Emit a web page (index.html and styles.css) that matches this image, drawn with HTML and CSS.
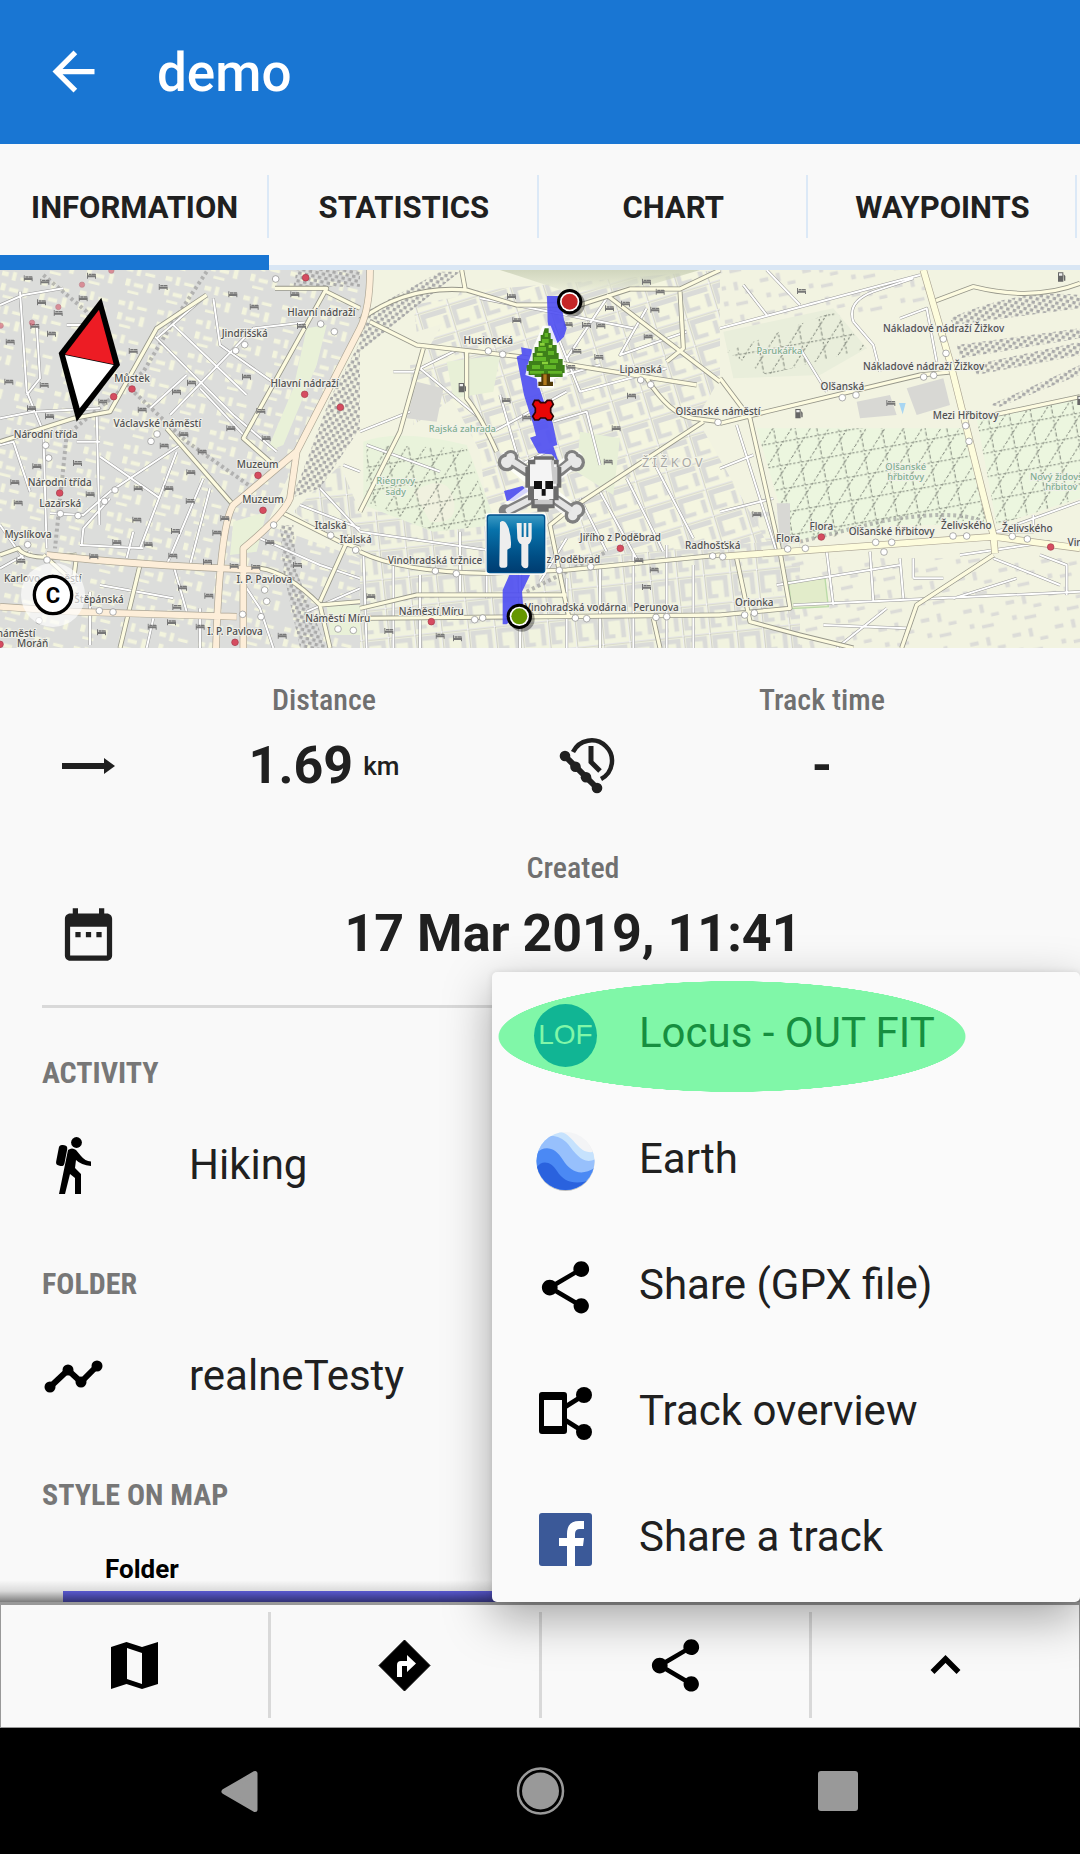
FILE: index.html
```html
<!DOCTYPE html>
<html lang="en">
<head>
<meta charset="utf-8">
<meta name="viewport" content="width=device-width, initial-scale=1">
<title>demo</title>
<link rel="stylesheet" href="styles.css">
</head>
<body>
<div class="app">
  <header class="topbar">
    <button class="back" type="button" aria-label="Back">
      <svg class="icon" viewBox="0 0 24 24"><path fill="#fff" d="M20 11H7.83l5.59-5.59L12 4l-8 8 8 8 1.41-1.41L7.83 13H20v-2z"/></svg>
    </button>
    <h1 class="title">demo</h1>
  </header>

  <nav class="tabs">
    <a class="tab tab-active" href="#information">INFORMATION</a>
    <a class="tab" href="#statistics">STATISTICS</a>
    <a class="tab" href="#chart">CHART</a>
    <a class="tab" href="#waypoints">WAYPOINTS</a>
    <span class="tab"></span>
  </nav>

  <div class="stage">
    <main class="content" id="information">
      <svg class="map" viewBox="0 15 3240 1134" role="img" aria-label="Track map">
        <defs>
          <pattern id="oldtown" width="120" height="104" patternUnits="userSpaceOnUse" patternTransform="rotate(14)">
            <rect width="120" height="104" fill="#dcdddb"/>
            <path fill="#f3f4de" d="M12 14h20v14h-20zM44 10h12v26h-12zM70 20h30v10h-30zM18 50h14v22h-14zM44 58h28v12h-28zM86 48h14v30h-14zM30 84h34v8h-34z"/>
          </pattern>
          <pattern id="blocks" width="96" height="84" patternUnits="userSpaceOnUse" patternTransform="rotate(-17)">
            <rect width="96" height="84" fill="#f4f5e0"/>
            <path fill="#dadbd8" d="M8 8h80v16h-80zM8 24h14v46h-14zM74 30h14v40h-14zM22 58h30v12h-30z"/>
            <path d="M0 0h96M0 0v84" stroke="#999" stroke-width="8"/>
            <path d="M0 0h96M0 0v84" stroke="#fff" stroke-width="5"/>
          </pattern>
          <pattern id="blocks2" width="80" height="88" patternUnits="userSpaceOnUse" patternTransform="rotate(-6)">
            <rect width="80" height="88" fill="#f1f3df"/>
            <path fill="#dadbd8" d="M8 8h64v14h-64zM8 22h14v52h-14zM58 22h14v52h-14zM22 62h18v12h-18z"/>
            <path d="M0 0h80M0 0v88" stroke="#999" stroke-width="8"/>
            <path d="M0 0h80M0 0v88" stroke="#fff" stroke-width="5"/>
          </pattern>
          <pattern id="suburb" width="130" height="100" patternUnits="userSpaceOnUse" patternTransform="rotate(-12)">
            <path fill="#dcdcd8" d="M10 14h26v12h-26zM60 8h12v26h-12zM90 40h24v10h-24zM20 60h14v14h-14zM56 70h36v10h-36z"/>
          </pattern>
          <pattern id="paths" width="64" height="70" patternUnits="userSpaceOnUse" patternTransform="rotate(-10)">
            <path d="M0 20h64M24 0v70M0 70L64 0" fill="none" stroke="#7c8277" stroke-width="3" stroke-dasharray="7 6"/>
          </pattern>
          <pattern id="rail" width="20" height="24" patternUnits="userSpaceOnUse" patternTransform="rotate(12)">
            <path fill="#aaa" d="M0 0h10v10h-10zM10 12h10v10h-10z"/>
          </pattern>
          <linearGradient id="plate" x1="0" y1="0" x2="0" y2="1">
            <stop offset="0" stop-color="#3c9bc4"/><stop offset=".25" stop-color="#0873ab"/><stop offset=".7" stop-color="#004f86"/><stop offset="1" stop-color="#003c70"/>
          </linearGradient>
          <linearGradient id="hill" x1="0" y1="0" x2="0" y2="1">
            <stop offset="0" stop-color="#c2c9ae"/><stop offset="1" stop-color="#e9ecd8"/>
          </linearGradient>
          <symbol id="bed" viewBox="0 0 30 20"><path fill="#777" d="M1 1h3v8h24v10h-3v-4H4v4H1zM6 4h9v4H6zM16 4h10q2 1 2 4H16z"/></symbol>
          <symbol id="fuel" viewBox="0 0 26 32"><path fill="#666" d="M2 2h16v28H2zM19 8l5 5v14h-4z"/><path fill="#eee" d="M5 5h10v7H5z"/></symbol>

          <g id="minor">
            <path d="M0 120L70 90 190 70M60 80L80 380 130 500 140 850M0 460L100 440 300 430M110 180L120 340 80 390M200 180h60v200M290 440L298 780M300 575L480 700M150 745L250 750 330 680 540 540M230 530h70M245 840L250 790 330 700M530 560L420 850M610 640L500 900M630 670L570 900M240 840L430 850M0 540L40 530 90 680M0 780L70 880M465 215L700 450 830 560M600 370L740 520M520 180L740 390M510 450L760 190 930 170M640 100L660 240 830 360M620 90L470 220M560 330L450 430M400 800L380 880M0 910L90 860M300 960L520 1000M270 980v160M460 1060L440 1149M520 900L560 1040M600 1030v119M920 1040L1080 970M780 820L960 900 1080 940M900 720L1080 790M1030 600L1080 620M960 670L1080 800M720 940L780 1030 820 1149"/>
            <path d="M1080 500L1230 440M1240 320L1380 250M1180 320h80M1260 310L1440 460M1440 100L1700 150 1900 190M1100 540L1320 620M1480 500L1700 380M1500 390L1560 600 1640 560M1620 350L1800 300M1660 470L1760 440 1800 600M1380 800v180M1460 800v200M1560 900v249M1620 950L1700 820M1700 940v209M1800 900v249M1900 860v289M2000 840v309M2080 900v249M1740 700L1820 860M1800 680L1920 900M1880 640L1990 860M1960 590L2080 820M1660 180L1740 380 2000 310M1820 100L1700 280M1940 130L1860 270 2060 200M1090 860L1100 1149M1180 900v249M1260 930v219M1080 800L1500 860"/>
            <path d="M2160 190L2760 30M2300 15L2400 120M2230 60L2300 150M2560 170Q2540 110 2620 80L2740 40M2560 170L2620 240 2640 320M2480 380L2400 250M2700 160L2780 130 2810 290M2160 610L2260 570M2160 740L2320 700M2210 480L2330 860M2330 960L2700 900M2480 860L2500 1020M2610 860L2620 1010M2700 880L2710 1000M2380 1020L3240 980M2740 940h90M2740 880v60M2660 1030L2510 1149M3120 870L3200 900V990M3100 750V800L2990 800 3240 710M2980 880L3180 960M2880 870L3150 830M2470 1080L2720 1090M2860 1000L3050 940"/>
          </g>
          <g id="major">
            <path d="M0 530L220 460 330 440 470 190 620 90M0 870L55 850Q80 890 230 870M230 870L220 950 130 870M420 900L360 1149M825 70H980L730 520 810 590M980 80L1080 130M500 490L700 720M850 745L1020 830 1080 850M780 910Q860 920 960 1020L990 1149M960 1020L1080 1010M1050 810L960 1010"/>
            <path d="M1080 165Q1220 60 1400 75L1550 120 1740 120 1890 72 2040 72 2160 15M1110 170L1250 240 1560 275 1900 330 2090 360M1270 250L1200 500 1080 740M1400 260V400Q1440 450 1490 560M1820 90L2160 350M2040 80L2050 250 2000 290M1940 340Q2010 450 2080 460L2160 470M2110 470L1700 740 1650 780 1705 1050M1080 860Q1200 920 1460 925L1700 915 2160 870M1080 1030L1250 990H1700M1080 1060L2160 1050M1960 1060L1980 1149M1385 15L1395 70"/>
            <path d="M2160 475L2300 440 2760 330 2860 320M2160 340L2250 460 2340 860 2370 1030 2160 1050M2210 880L2250 1070 2400 1110 2560 1149M2800 110L2920 65Q3100 110 3240 55M2980 450L3240 395"/>
            <path d="M2980 870L2750 1020 2705 1149"/>
          </g>
          <g id="trunk">
            <path d="M140 870Q400 900 780 915M0 1025L220 1040 710 1055M1110 15Q1110 130 1080 190L890 560 870 700Q850 750 730 850V1149M890 560L700 720Q660 780 648 1149"/>
          </g>
          <g id="avenue">
            <path d="M2770 15L2850 290 2980 810 2985 865M2160 875L2980 815 3240 850"/>
          </g>
        </defs>

        <rect y="15" width="3240" height="1134" fill="#f2f3e1"/>
        <path fill="url(#oldtown)" d="M0 15H1110L1080 180 880 600 800 780 1080 880V1149H0z"/>
        <path fill="url(#blocks2)" d="M880 740L1020 600 1080 740H2400V1149H1080L1080 880z"/>
        <path fill="url(#blocks)" d="M1380 80L2160 15V340L2090 460 2300 830 1480 900 1440 560 1280 260z"/>
        <path fill="url(#blocks)" d="M1230 300L1340 290 1360 400 1240 480zM1240 120L1400 90 1380 160 1250 200z"/>
        <path fill="url(#suburb)" d="M2160 15h620v100l-600 120zM2320 880h920v269H2320z"/>
        <path fill="url(#hill)" opacity=".7" d="M1500 15H2100L1950 60 1700 80z"/>
        <path fill="#e9eedb" d="M2170 200L2500 130 2600 250 2460 330 2200 340z"/>
        <path fill="#e9f3db" d="M1090 530Q1200 490 1400 540L1490 780 1300 800 1090 720z"/>
        <path fill="#f0f1df" d="M1240 680Q1340 620 1360 700T1290 770z"/>
        <path fill="#e8f0d7" d="M1340 290L1500 270 1480 380 1360 400zM1740 500L1860 520 1840 690 1730 620z"/>
        <path fill="#ecf6df" d="M2270 490H2890L2960 780 2660 780 2370 830zM2930 460L3240 390V700L2990 780z"/>
        <path fill="#e2ecca" stroke="#badba7" stroke-width="4" d="M2365 950l110-10 10 85-110 6z"/>
        <path fill="url(#paths)" d="M1100 540L1400 550 1480 780 1300 800 1100 710zM2270 490H2890L2960 760 2370 830zM2930 460L3240 390V700L2990 780zM2180 260L2500 140 2600 250 2300 330z"/>
        <path fill="#e9f1d8" d="M920 190L980 180 950 300 850 540 800 560 880 370zM700 770L800 740 770 860 690 870zM980 1020H1080V1110H990z"/>
        <path fill="url(#rail)" d="M890 15H1080V65H880zM1080 230L990 400 960 480 900 640 870 700 960 670 1080 490zM840 780h40l10 140 90 229h-80L850 920zM1080 260L1380 20h-60L1080 150zM2850 160Q3050 70 3240 90V130L2860 180zM2870 240L3240 190V220L2880 280zM2920 300L3240 230V270L2930 330zM2970 420L3240 300V330L3000 425z"/>
        <path fill="none" stroke="#999" stroke-width="12" stroke-dasharray="9 9" opacity=".65" d="M130 30L260 140 310 240M620 20L520 170 430 320 200 510 165 850M390 370L560 530 760 670M2400 830L2640 770Q2860 730 2950 770M1580 980L1820 860"/>
        <path fill="#d8d8d4" d="M2720 370l110-30 20 80-100 30zM2570 410l100-20 20 60-110 10zM1250 350l80 20-20 100-90-10zM2330 715h40v120h-30z"/>

        <use href="#minor" class="street-edge"/>
        <use href="#minor" class="street"/>
        <use href="#major" class="road-edge"/>
        <use href="#major" class="road"/>
        <use href="#trunk" class="trunk-edge"/>
        <use href="#trunk" class="trunk"/>
        <use href="#avenue" class="trunk-edge"/>
        <use href="#avenue" class="avenue"/>

        <g>
          <use href="#bed" x="70" y="30" width="30" height="20"/><use href="#bed" x="120" y="40" width="30" height="20"/><use href="#bed" x="260" y="22" width="30" height="20"/><use href="#bed" x="475" y="56" width="30" height="20"/><use href="#bed" x="110" y="102" width="30" height="20"/><use href="#bed" x="235" y="90" width="30" height="20"/><use href="#bed" x="160" y="134" width="30" height="20"/><use href="#bed" x="90" y="173" width="30" height="20"/><use href="#bed" x="140" y="196" width="30" height="20"/><use href="#bed" x="16" y="220" width="30" height="20"/><use href="#bed" x="12" y="340" width="30" height="20"/><use href="#bed" x="118" y="350" width="30" height="20"/><use href="#bed" x="80" y="420" width="30" height="20"/><use href="#bed" x="134" y="444" width="30" height="20"/><use href="#bed" x="294" y="400" width="30" height="20"/><use href="#bed" x="385" y="248" width="30" height="20"/><use href="#bed" x="412" y="424" width="30" height="20"/><use href="#bed" x="515" y="370" width="30" height="20"/><use href="#bed" x="560" y="343" width="30" height="20"/><use href="#bed" x="684" y="78" width="30" height="20"/><use href="#bed" x="748" y="115" width="30" height="20"/><use href="#bed" x="870" y="78" width="30" height="20"/><use href="#bed" x="890" y="173" width="30" height="20"/><use href="#bed" x="725" y="325" width="30" height="20"/><use href="#bed" x="768" y="428" width="30" height="20"/><use href="#bed" x="678" y="480" width="30" height="20"/><use href="#bed" x="784" y="510" width="30" height="20"/><use href="#bed" x="537" y="498" width="30" height="20"/><use href="#bed" x="478" y="532" width="30" height="20"/><use href="#bed" x="592" y="550" width="30" height="20"/><use href="#bed" x="558" y="612" width="30" height="20"/><use href="#bed" x="96" y="594" width="30" height="20"/><use href="#bed" x="218" y="584" width="30" height="20"/><use href="#bed" x="30" y="642" width="30" height="20"/><use href="#bed" x="256" y="678" width="30" height="20"/><use href="#bed" x="40" y="703" width="30" height="20"/><use href="#bed" x="400" y="660" width="30" height="20"/><use href="#bed" x="492" y="660" width="30" height="20"/><use href="#bed" x="556" y="698" width="30" height="20"/><use href="#bed" x="396" y="754" width="30" height="20"/><use href="#bed" x="512" y="788" width="30" height="20"/><use href="#bed" x="660" y="750" width="30" height="20"/><use href="#bed" x="636" y="793" width="30" height="20"/><use href="#bed" x="336" y="822" width="30" height="20"/><use href="#bed" x="430" y="828" width="30" height="20"/><use href="#bed" x="267" y="864" width="30" height="20"/><use href="#bed" x="48" y="878" width="30" height="20"/><use href="#bed" x="504" y="862" width="30" height="20"/><use href="#bed" x="608" y="880" width="30" height="20"/><use href="#bed" x="795" y="822" width="30" height="20"/><use href="#bed" x="688" y="893" width="30" height="20"/><use href="#bed" x="753" y="896" width="30" height="20"/><use href="#bed" x="878" y="890" width="30" height="20"/><use href="#bed" x="533" y="958" width="30" height="20"/><use href="#bed" x="612" y="982" width="30" height="20"/><use href="#bed" x="516" y="1016" width="30" height="20"/><use href="#bed" x="442" y="1075" width="30" height="20"/><use href="#bed" x="500" y="1062" width="30" height="20"/><use href="#bed" x="586" y="1075" width="30" height="20"/><use href="#bed" x="290" y="1092" width="30" height="20"/><use href="#bed" x="832" y="1102" width="30" height="20"/>
          <use href="#bed" x="1520" y="84" width="30" height="20"/><use href="#bed" x="1536" y="156" width="30" height="20"/><use href="#bed" x="1925" y="40" width="30" height="20"/><use href="#bed" x="1966" y="70" width="30" height="20"/><use href="#bed" x="1862" y="106" width="30" height="20"/><use href="#bed" x="1814" y="120" width="30" height="20"/><use href="#bed" x="1950" y="124" width="30" height="20"/><use href="#bed" x="1690" y="168" width="30" height="20"/><use href="#bed" x="1745" y="170" width="30" height="20"/><use href="#bed" x="1788" y="172" width="30" height="20"/><use href="#bed" x="1930" y="205" width="30" height="20"/><use href="#bed" x="1716" y="248" width="30" height="20"/><use href="#bed" x="1782" y="266" width="30" height="20"/><use href="#bed" x="1698" y="296" width="30" height="20"/><use href="#bed" x="1880" y="382" width="30" height="20"/><use href="#bed" x="1504" y="396" width="30" height="20"/><use href="#bed" x="1566" y="448" width="30" height="20"/><use href="#bed" x="1834" y="480" width="30" height="20"/><use href="#bed" x="1810" y="580" width="30" height="20"/><use href="#bed" x="1902" y="876" width="30" height="20"/><use href="#bed" x="1948" y="904" width="30" height="20"/><use href="#bed" x="1925" y="956" width="30" height="20"/><use href="#bed" x="1098" y="984" width="30" height="20"/><use href="#bed" x="1306" y="1102" width="30" height="20"/><use href="#bed" x="1358" y="1110" width="30" height="20"/><use href="#bed" x="1152" y="1088" width="30" height="20"/><use href="#bed" x="2390" y="68" width="30" height="20"/><use href="#bed" x="2658" y="404" width="30" height="20"/><use href="#bed" x="2256" y="738" width="30" height="20"/>
          <use href="#fuel" x="1374" y="352" width="26" height="32"/><use href="#fuel" x="2384" y="430" width="26" height="32"/><use href="#fuel" x="3172" y="20" width="26" height="32"/><use href="#fuel" x="3230" y="390" width="26" height="32"/>
          <path fill="#a8d6f2" d="M2697 414h20l-9 34z"/>
        </g>

        <g class="metro">
          <circle cx="917" cy="38" r="10"/><circle cx="396" cy="372" r="10"/><circle cx="341" cy="395" r="10"/><circle cx="914" cy="388" r="10"/><circle cx="1021" cy="427" r="10"/><circle cx="774" cy="631" r="10"/><circle cx="789" cy="736" r="10"/><circle cx="179" cy="684" r="10"/><circle cx="705" cy="1132" r="10"/><circle cx="0" cy="1138" r="10"/><circle cx="1294" cy="1070" r="10"/><circle cx="1861" cy="850" r="10"/><circle cx="2464" cy="816" r="10"/><circle cx="3152" cy="846" r="10"/>
          <g opacity=".55"><circle cx="334" cy="17" r="8"/><circle cx="246" cy="59" r="8"/><circle cx="175" cy="126" r="8"/><circle cx="96" cy="173" r="8"/><circle cx="2" cy="182" r="8"/></g>
        </g>
        <g class="stop">
          <circle cx="827" cy="42" r="10"/><circle cx="962" cy="177" r="10"/><circle cx="1003" cy="200" r="10"/><circle cx="734" cy="239" r="10"/><circle cx="707" cy="257" r="10"/><circle cx="471" cy="507" r="10"/><circle cx="453" cy="529" r="10"/><circle cx="137" cy="541" r="10"/><circle cx="146" cy="579" r="10"/><circle cx="345" cy="675" r="10"/><circle cx="314" cy="709" r="10"/><circle cx="181" cy="746" r="10"/><circle cx="234" cy="752" r="10"/><circle cx="83" cy="839" r="10"/><circle cx="141" cy="885" r="10"/><circle cx="821" cy="780" r="10"/><circle cx="992" cy="811" r="10"/><circle cx="1067" cy="855" r="10"/><circle cx="794" cy="975" r="10"/><circle cx="800" cy="1009" r="10"/><circle cx="728" cy="1048" r="10"/><circle cx="783" cy="1055" r="10"/><circle cx="298" cy="1037" r="10"/><circle cx="339" cy="1041" r="10"/><circle cx="117" cy="1067" r="10"/><circle cx="1014" cy="1092" r="10"/><circle cx="1060" cy="1096" r="10"/>
          <circle cx="1465" cy="258" r="10"/><circle cx="1508" cy="268" r="10"/><circle cx="1922" cy="345" r="10"/><circle cx="1952" cy="359" r="10"/><circle cx="2154" cy="472" r="10"/><circle cx="2168" cy="875" r="10"/><circle cx="2138" cy="873" r="10"/><circle cx="1306" cy="918" r="10"/><circle cx="1369" cy="926" r="10"/><circle cx="1678" cy="916" r="10"/><circle cx="1772" cy="905" r="10"/><circle cx="1424" cy="1064" r="10"/><circle cx="1448" cy="1059" r="10"/><circle cx="1726" cy="1059" r="10"/><circle cx="1760" cy="1061" r="10"/><circle cx="1968" cy="1057" r="10"/><circle cx="2000" cy="1055" r="10"/>
          <circle cx="2830" cy="222" r="10"/><circle cx="2838" cy="265" r="10"/><circle cx="2771" cy="336" r="10"/><circle cx="2801" cy="331" r="10"/><circle cx="2527" cy="398" r="10"/><circle cx="2568" cy="390" r="10"/><circle cx="2897" cy="482" r="10"/><circle cx="2907" cy="529" r="10"/><circle cx="2363" cy="852" r="10"/><circle cx="2416" cy="850" r="10"/><circle cx="2627" cy="832" r="10"/><circle cx="2675" cy="832" r="10"/><circle cx="2652" cy="861" r="10"/><circle cx="2859" cy="813" r="10"/><circle cx="2900" cy="813" r="10"/><circle cx="3037" cy="814" r="10"/><circle cx="3082" cy="822" r="10"/><circle cx="2234" cy="1050" r="10"/><circle cx="2263" cy="1044" r="10"/>
        </g>

        <g class="place">
          <text x="964" y="154">Hlavní nádraží</text><text x="734" y="216">Jindřišská</text><text x="914" y="367">Hlavní nádraží</text><text x="396" y="352">Můstek</text><text x="472" y="486">Václavské náměstí</text><text x="137" y="519">Národní třída</text><text x="179" y="663">Národní třída</text><text x="181" y="725">Lazarská</text><text x="84" y="818">Myslíkova</text><text x="773" y="610">Muzeum</text><text x="789" y="714">Muzeum</text><text x="992" y="791">Italská</text><text x="1067" y="833">Italská</text><text x="128" y="950">Karlovo náměstí</text><text x="297" y="1015">Štěpánská</text><text x="793" y="953">I. P. Pavlova</text><text x="705" y="1111">I. P. Pavlova</text><text x="1013" y="1070">Náměstí Míru</text><text x="-10" y="1117">Karlovo náměstí</text><text x="98" y="1147">Moráň</text>
          <text x="1465" y="237">Husinecká</text><text x="1922" y="323">Lipanská</text><text x="2154" y="451">Olšanské náměstí</text><text x="1305" y="897">Vinohradská tržnice</text><text x="1679" y="894">Jiřího z Poděbrad</text><text x="1861" y="828">Jiřího z Poděbrad</text><text x="2138" y="852">Radhošťská</text><text x="1294" y="1049">Náměstí Míru</text><text x="1727" y="1037">Vinohradská vodárna</text><text x="1968" y="1037">Perunova</text>
          <text x="2831" y="200">Nákladové nádraží Žižkov</text><text x="2771" y="315">Nákladové nádraží Žižkov</text><text x="2527" y="375">Olšanská</text><text x="2897" y="461">Mezi Hřbitovy</text><text x="2464" y="796">Flora</text><text x="2364" y="831">Flora</text><text x="2675" y="811">Olšanské hřbitovy</text><text x="2899" y="793">Želivského</text><text x="3082" y="801">Želivského</text><text x="3292" y="844">Vinohradská</text><text x="2263" y="1023">Orionka</text>
        </g>
        <g class="park">
          <text x="1387" y="501">Rajská zahrada</text><text x="1187" y="658">Riegrovy</text><text x="1187" y="689">sady</text><text x="2338" y="266">Parukářka</text><text x="2717" y="615">Olšanské</text><text x="2717" y="646">hřbitovy</text><text x="3184" y="644">Nový židovský</text><text x="3184" y="675">hřbitov</text>
        </g>
        <text class="district" x="2017" y="607">Ž I Ž K O V</text>

        <!-- recorded track -->
        <g transform="translate(1080 0)">
          <path fill="#4d4df2" opacity=".9" d="M561 93h39l12 72 8 25-8 25-20 20-36-18 10-30-3-17zM483 247l32 6 2 40 16 60 20 60 25 60 14 67-12 4 17 50-22-26-40-3-25-47 18-6-8-32-28-90-22-115 16-8z"/>
          <path fill="#4d4df2" opacity=".9" d="M432 678l55-15 20 15-45 30h-22zM448 930h62l-24 50 4 50-50 48h-12V975z"/>
          <g>
            <circle cx="637" cy="117" r="38" opacity=".35"/><circle cx="629" cy="110" r="38"/><circle cx="629" cy="110" r="29" fill="#fff"/><circle cx="629" cy="110" r="24" fill="#c52626"/>
            <circle cx="486" cy="1062" r="38" opacity=".35"/><circle cx="478" cy="1054" r="38"/><circle cx="478" cy="1054" r="29" fill="#fff"/><circle cx="478" cy="1054" r="24" fill="#659700"/>
          </g>
          <!-- tree -->
          <path fill="#fff" opacity=".85" d="M548 182h24l22 56 24 68 6 28-42 8v26h-50v-26l-36-12 6-28 20-60z"/>
          <path fill="#3e7f19" d="M554 190h12v14h6v18h6v18h12v24h6v18h12v18h6v24h-6v12h-42v-6h-12v6h-30v-6h-18v-12h-6v-18h6v-12h12v-24h6v-18h12v-18h6v-18h6z"/>
          <path fill="#61b526" d="M554 204h10v12h-10zM546 222h20v12h-20zM534 246h24v12h-24zM564 258h18v12h-18zM522 276h36v12h-36zM570 282h24v12h-24zM516 300h24v12h-24zM552 300h36v12h-36zM510 318h42v8h-42zM564 318h42v8h-42z"/>
          <path fill="#8ad23b" d="M540 234h14v8h-14zM530 264h18v8h-18zM566 240h10v8h-10zM546 290h18v8h-18z"/>
          <path fill="#513a08" d="M544 326h26v24h9v13h-44v-13h9z"/><path fill="#b27a1c" d="M550 328h10v32h-10z"/>
          <!-- barrier cross -->
          <path fill="#e90606" stroke="#2d0505" stroke-width="5" d="M524 406h12l6 7h14l6-7h12l6 12-8 12v12l8 12-6 11h-12l-6-6h-14l-6 6h-12l-6-11 8-12v-12l-8-12z"/>
          <!-- skull -->
          <path fill="none" stroke="#fff" stroke-width="46" stroke-linecap="round" opacity=".75" d="M444 580L646 750M646 580L440 740"/>
          <path fill="none" stroke="#808080" stroke-width="32" stroke-linecap="round" d="M446 582L500 618M644 582L600 618M590 706L646 744M505 706L446 736"/>
          <g fill="#808080"><circle cx="440" cy="592" r="27"/><circle cx="452" cy="578" r="23"/><circle cx="648" cy="592" r="27"/><circle cx="636" cy="578" r="23"/><circle cx="650" cy="734" r="26"/><circle cx="638" cy="752" r="24"/><circle cx="436" cy="738" r="20"/></g>
          <path fill="none" stroke="#e4e4e4" stroke-width="18" stroke-linecap="round" d="M446 582L504 618M644 582L598 618M590 706L646 744M505 706L446 736"/>
          <g fill="#e8e8e8"><circle cx="440" cy="592" r="17"/><circle cx="452" cy="577" r="13"/><circle cx="648" cy="592" r="17"/><circle cx="636" cy="577" r="13"/><circle cx="650" cy="734" r="16"/><circle cx="638" cy="752" r="14"/></g>
          <path fill="#6c6c6c" d="M522 574h60v10h14v22h8v62h-8v38h-12v24h-18v10h-34v-10h-18v-24h-10v-38h-8v-62h8v-22h18z"/>
          <path fill="#f4f4f4" d="M526 584h50v14h14v66h-10v38h-12v12h-34v-12h-12v-38h-12v-66h16z"/>
          <path fill="#c9c9c9" d="M572 586h10v20h10v50h-14zM524 704h54v14h-54z"/>
          <path fill="#111" d="M522 648h24v24h-24zM556 648h23v24h-23zM545 672h12v20h-12z"/>
          <!-- restaurant -->
          <rect x="376" y="744" width="184" height="186" rx="10" fill="#fff" opacity=".8"/>
          <rect x="382" y="750" width="172" height="173" rx="8" fill="url(#plate)" stroke="#00508a" stroke-width="4"/>
          <path fill="#eee" d="M420 772q14-14 26 18 10 36 6 58l-10 6v46q0 8-8 8h-10q-6 0-6-8zM478 774h7v42h6v-42h8v42h6v-42h10v46q-2 14-10 18v62q0 10-8 10t-13-10v-62q-10-4-12-18l-2-46z"/>
        </g>

        <!-- compass -->
        <path d="M304 98L360 300 230 470 176 264z"/>
        <path fill="#ed1c24" d="M297 134L341 298 195 268z"/><path fill="#fff" d="M195 270L341 300 239 430z"/>
        <!-- copyright badge -->
        <circle cx="159" cy="990" r="96" fill="#fff" opacity=".65"/>
        <circle cx="159" cy="990" r="56" fill="#fff" stroke="#000" stroke-width="10"/>
        <text class="copy" x="159" y="1013">C</text>
      </svg>

      <section class="stats">
        <div class="stat">
          <svg class="icon" viewBox="0 0 63 63"><path fill="#202020" d="M5 28h42v-5l11 8-11 8v-5H5z"/></svg>
          <div class="figure"><div class="label">Distance</div><div class="value">1.69<span class="unit">km</span></div></div>
        </div>
        <div class="stat">
          <svg class="icon" viewBox="0 0 63 63"><g fill="none" stroke="#202020" stroke-width="4"><path stroke-width="4.500" d="M18 17A20.500 20.500 0 1 1 46 44"/><path stroke-width="5" d="M36 11v16l9 9"/><path stroke-width="6" d="M10 21l32 32"/></g><g fill="#202020"><circle cx="10" cy="21" r="5.300"/><circle cx="20.500" cy="31.700" r="5.300"/><circle cx="31" cy="42.300" r="5.300"/><circle cx="42" cy="53" r="5.300"/></g></svg>
          <div class="figure"><div class="label">Track time</div><div class="value">-</div></div>
        </div>
        <div class="stat stat-wide">
          <svg class="icon" viewBox="0 0 24 24"><path fill="#202020" d="M9 11H7v2h2v-2zm4 0h-2v2h2v-2zm4 0h-2v2h2v-2zm2-7h-1V2h-2v2H8V2H6v2H5c-1.110 0-1.990.9-1.990 2L3 20c0 1.100.890 2 2 2h14c1.100 0 2-.9 2-2V6c0-1.100-.9-2-2-2zm0 16H5V9h14v11z"/></svg>
          <div class="figure"><div class="label">Created</div><div class="value">17 Mar 2019, 11:41</div></div>
        </div>
      </section>

      <section class="details">
        <h2 class="heading">ACTIVITY</h2>
        <div class="row">
          <svg class="icon" viewBox="0 0 63 63"><circle cx="34.500" cy="9.500" r="5.400"/><rect x="15.500" y="12" width="8.500" height="21" rx="3.500" transform="rotate(11 20 22)"/><path d="M26 17q4-3 8 0l5 6q4 5 10 5.500v4.500q-10-1-15-6l-1 8 6 6v20h-6V45l-5-4-5 20h-6z"/></svg>
          <span>Hiking</span>
        </div>
        <h2 class="heading">FOLDER</h2>
        <div class="row">
          <svg class="icon" viewBox="0 0 63 63"><path fill="none" stroke="#000" stroke-width="6" d="M8 43l18-17 13 12 16-16"/><circle cx="8" cy="43" r="5.500"/><circle cx="26" cy="26" r="5.500"/><circle cx="39" cy="38" r="5.500"/><circle cx="55" cy="22" r="5.500"/></svg>
          <span>realneTesty</span>
        </div>
        <h2 class="heading">STYLE ON MAP</h2>
        <div class="preview"><div class="preview-name">Folder</div><div class="preview-line"></div></div>
      </section>
    </main>

    <div class="menu" role="menu">
      <button class="item item-marked" type="button" role="menuitem"><span class="badge">LOF</span><span class="item-text">Locus - OUT FIT</span></button>
      <button class="item" type="button" role="menuitem">
        <svg class="icon" viewBox="0 0 63 63"><defs><clipPath id="globe"><circle cx="31.500" cy="31" r="29"/></clipPath></defs><circle cx="31.500" cy="32" r="29" fill="#bbb"/><g clip-path="url(#globe)"><rect width="63" height="63" fill="#f3f4f6"/><path fill="#c6e2fd" d="M0 12Q14-4 30 3C42 9 46 27 63 21V63H0z"/><path fill="#97c0fc" d="M0 14C10 4 24 3 34 14 43 26 51 36 63 28V63H0z"/><path fill="#4b89f4" d="M0 26C8 15 20 15 29 30 37 43 49 47 63 36V63H0z"/><path fill="#2a62de" d="M0 42C6 28 17 31 23 41 31 54 45 56 63 47V63H0z"/></g></svg>
        <span class="item-text">Earth</span>
      </button>
      <button class="item" type="button" role="menuitem">
        <svg class="icon" viewBox="0 0 24 24"><path d="M18 16.080c-.76 0-1.440.3-1.960.77L8.910 12.700c.05-.23.09-.46.09-.7s-.04-.47-.09-.7l7.050-4.110c.54.5 1.250.81 2.040.81 1.660 0 3-1.340 3-3s-1.340-3-3-3-3 1.340-3 3c0 .24.04.47.09.7L8.040 9.810C7.500 9.310 6.790 9 6 9c-1.660 0-3 1.340-3 3s1.340 3 3 3c.79 0 1.500-.31 2.040-.81l7.120 4.160c-.05.21-.08.43-.08.65 0 1.610 1.310 2.920 2.920 2.920s2.920-1.310 2.920-2.920-1.310-2.920-2.920-2.920z"/></svg>
        <span class="item-text">Share (GPX file)</span>
      </button>
      <button class="item" type="button" role="menuitem">
        <svg class="icon" viewBox="0 0 63 63"><path fill-rule="evenodd" d="M8 10h22q3 0 3 3v36q0 3-3 3H8q-3 0-3-3V13q0-3 3-3zm2 8v26h18V18z"/><path fill="none" stroke="#000" stroke-width="5" d="M50 13L31 25M50 50L31 38"/><circle cx="50" cy="13" r="8"/><circle cx="50" cy="50" r="8"/></svg>
        <span class="item-text">Track overview</span>
      </button>
      <button class="item" type="button" role="menuitem">
        <svg class="icon" viewBox="0 0 63 63"><rect x="5" y="5" width="53" height="53" rx="3" fill="#3b5998"/><path fill="#fff" d="M33 58V38h-8v-8h8v-4q0-13 12-13h5v8h-4q-5 0-5 5v4h9l-1 8h-8v20z"/></svg>
        <span class="item-text">Share a track</span>
      </button>
    </div>
  </div>

  <footer class="toolbar">
    <button class="tool" type="button" aria-label="Map"><svg class="icon" viewBox="0 0 63 63"><path fill-rule="evenodd" d="M8 13l15.500-5L39 13l16-5v42l-16 5-15.500-5L8 55zm16 1v31l15 5V19z"/></svg></button>
    <button class="tool" type="button" aria-label="Navigate"><svg class="icon" viewBox="0 0 63 63"><path d="M31.500 6L57 31.500 31.500 57 6 31.500z" stroke="#000" stroke-linejoin="round"/><path fill="#fff" d="M24 43V31q0-4 4-4h6v-6l9 8.500-9 8.500v-6h-5v11z"/></svg></button>
    <button class="tool" type="button" aria-label="Share"><svg class="icon" viewBox="0 0 24 24"><path d="M18 16.080c-.76 0-1.440.3-1.960.77L8.910 12.700c.05-.23.09-.46.09-.7s-.04-.47-.09-.7l7.050-4.110c.54.5 1.250.81 2.040.81 1.660 0 3-1.340 3-3s-1.340-3-3-3-3 1.340-3 3c0 .24.04.47.09.7L8.040 9.810C7.500 9.310 6.790 9 6 9c-1.660 0-3 1.340-3 3s1.340 3 3 3c.79 0 1.500-.31 2.040-.81l7.120 4.160c-.05.21-.08.43-.08.65 0 1.610 1.310 2.920 2.920 2.920s2.920-1.310 2.920-2.920-1.310-2.920-2.920-2.920z"/></svg></button>
    <button class="tool" type="button" aria-label="More"><svg class="icon" viewBox="0 0 63 63"><path fill="none" stroke="#000" stroke-width="5.500" d="M18.500 38l13-13 13 13"/></svg></button>
  </footer>

  <nav class="sysbar">
    <button class="sys" type="button" aria-label="Back"><svg class="icon" viewBox="0 0 63 63"><path fill="#999" stroke="#999" stroke-width="5" stroke-linejoin="round" d="M14 31.500l31-18v36z"/></svg></button>
    <button class="sys" type="button" aria-label="Home"><svg class="icon" viewBox="0 0 63 63"><circle cx="31.500" cy="31" r="22.500" fill="none" stroke="#999" stroke-width="2.500"/><circle cx="31.500" cy="31" r="18.500" fill="#999"/></svg></button>
    <button class="sys" type="button" aria-label="Recent apps"><svg class="icon" viewBox="0 0 63 63"><rect x="11" y="11" width="40" height="40" rx="3" fill="#999"/></svg></button>
  </nav>
</div>
</body>
</html>
```
FILE: styles.css
```css
* { box-sizing: border-box; }

body {
  margin: 0;
  background: #f9f9f9;
  color: #202020;
  font-family: Roboto, "Liberation Sans", sans-serif;
}

h1, h2 { margin: 0; }

button {
  margin: 0;
  padding: 0;
  border: 0;
  background: none;
  color: inherit;
  font: inherit;
}

.app {
  display: flex;
  flex-direction: column;
  height: 100vh;
}

.icon {
  display: block;
  flex: none;
  width: 63px;
  height: 63px;
}

/* top bar */
.topbar {
  display: flex;
  flex: none;
  align-items: center;
  gap: 52px;
  height: 144px;
  padding: 0 42px 2px;
  background: #1976d3;
  color: #fff;
}

.title {
  font-size: 53px;
  font-weight: 500;
  line-height: 64px;
  padding-top: 4px;
}

/* tabs */
.tabs {
  display: flex;
  flex: none;
  height: 126px;
  overflow: hidden;
  box-shadow: inset 0 -5px #d9e6f4;
}

.tab {
  display: flex;
  flex: 0 0 25%;
  align-items: center;
  justify-content: center;
  color: #202020;
  font-size: 31px;
  font-weight: 700;
  text-decoration: none;
  background: linear-gradient(#dce9f7, #dce9f7) right 31px / 2px 63px no-repeat;
}

.tabs { padding-right: 3px; }

.tab-active { box-shadow: inset 0 -15px #1976d3; }

/* content */
.stage {
  position: relative;
  z-index: 1;
  flex: 1;
  min-height: 0;
}

.content {
  height: 100%;
  overflow: hidden;
}

.content::after {
  content: "";
  position: absolute;
  inset: auto 0 0;
  height: 22px;
  background: linear-gradient(rgba(0, 0, 0, 0), rgba(0, 0, 0, .12) 50%, rgba(0, 0, 0, .5));
}

/* map */
.map {
  display: block;
  width: 100%;
  height: auto;
}

.street-edge, .street, .road-edge, .road, .trunk-edge, .trunk, .avenue {
  fill: none;
  stroke-linejoin: round;
}

.street-edge { stroke: #999; stroke-width: 9px; }
.street { stroke: #fff; stroke-width: 6px; }
.road-edge { stroke: #96968a; stroke-width: 15px; }
.road { stroke: #fdfbe0; stroke-width: 10px; }
.trunk-edge { stroke: #aca594; stroke-width: 22px; }
.trunk { stroke: #fdeed9; stroke-width: 18px; }
.avenue { stroke: #fdfcdc; stroke-width: 18px; }
.metro { fill: #d64c60; stroke: #a53c4c; stroke-width: 2px; }
.stop { fill: #fff; stroke: #888; stroke-width: 2px; }

.place, .park {
  font-family: "Noto Sans", "Open Sans", sans-serif;
  font-size: 30px;
  font-weight: 500;
  text-anchor: middle;
  paint-order: stroke;
  stroke: #f1f1ea;
  stroke-width: 6px;
  stroke-linejoin: round;
}

.place { fill: #505050; }
.park { fill: #7fae8f; font-size: 28px; }

.district {
  fill: #a8a8a4;
  font-family: "Noto Sans", sans-serif;
  font-size: 38px;
  text-anchor: middle;
  paint-order: stroke;
  stroke: #f4f4ea;
  stroke-width: 6px;
}

.copy {
  font-size: 66px;
  font-weight: 700;
  text-anchor: middle;
}

/* figures */
.stats {
  display: grid;
  grid-template-columns: 1fr 1fr;
  row-gap: 50px;
  margin: 0 42px;
  padding: 32px 0 39px;
  border-bottom: 3px solid #d9d9d9;
}

.stat {
  display: flex;
  align-items: flex-end;
  padding-right: 26px;
}

.stat .icon { margin: 0 14px 0 15px; }

.stat-wide { grid-column: 1 / -1; }

.figure {
  flex: 1;
  text-align: center;
}

.label {
  margin-bottom: 14px;
  color: #707070;
  font-family: "Roboto Condensed", Roboto, sans-serif;
  font-size: 30px;
  font-weight: 500;
  line-height: 40px;
}

.value {
  font-size: 52px;
  font-weight: 700;
  line-height: 64px;
}

.unit {
  margin-left: 10px;
  font-size: 26px;
  font-weight: 500;
  vertical-align: 8px;
  line-height: 28px;
}

/* details */
.details { padding: 45px 42px 0; }

.heading {
  color: #777;
  font-family: "Roboto Condensed", Roboto, sans-serif;
  font-size: 30px;
  font-weight: 700;
  line-height: 40px;
}

.row {
  display: flex;
  align-items: center;
  gap: 84px;
  height: 142px;
  margin-bottom: 29px;
  font-size: 42px;
}

.preview { padding: 34px 0 0 21px; }

.preview-name {
  padding-left: 42px;
  color: #000;
  font-size: 26px;
  font-weight: 700;
  line-height: 40px;
}

.preview-line {
  height: 30px;
  margin-top: 2px;
  background: #6464ea;
}

/* share menu */
.menu {
  position: absolute;
  right: 0;
  bottom: 0;
  z-index: 1;
  width: 588px;
  border-radius: 5px;
  background: #fafafa;
  box-shadow: 0 16px 48px rgba(0, 0, 0, .34), 0 0 6px rgba(0, 0, 0, .1);
}

.item {
  display: flex;
  align-items: center;
  gap: 42px;
  width: 100%;
  height: 126px;
  padding-left: 42px;
  font-size: 42px;
  text-align: left;
}

.item-text { padding-bottom: 6px; }

.item-marked {
  color: #168f40;
  background: radial-gradient(closest-side, #80f7a8 99.500%, transparent) 6px 9px / 468px 111px no-repeat;
}

.badge {
  display: flex;
  align-items: center;
  justify-content: center;
  width: 63px;
  height: 63px;
  border-radius: 50%;
  background: #11b594;
  color: #80f7a8;
  font-family: "Liberation Sans", sans-serif;
  font-size: 28px;
}

/* bottom toolbar */
.toolbar {
  display: flex;
  flex: none;
  height: 126px;
  padding: 7px 0 9px;
  border: 1px solid #999;
  border-top-width: 3px;
  background: #f9f9f9;
}

.tool {
  display: flex;
  flex: 1;
  align-items: center;
  justify-content: center;
}

.tool + .tool { border-left: 3px solid #d9d9d9; }

/* system bar */
.sysbar {
  display: flex;
  flex: none;
  align-items: center;
  justify-content: space-between;
  height: 126px;
  padding: 0 19.400%;
  background: #000;
}
```
